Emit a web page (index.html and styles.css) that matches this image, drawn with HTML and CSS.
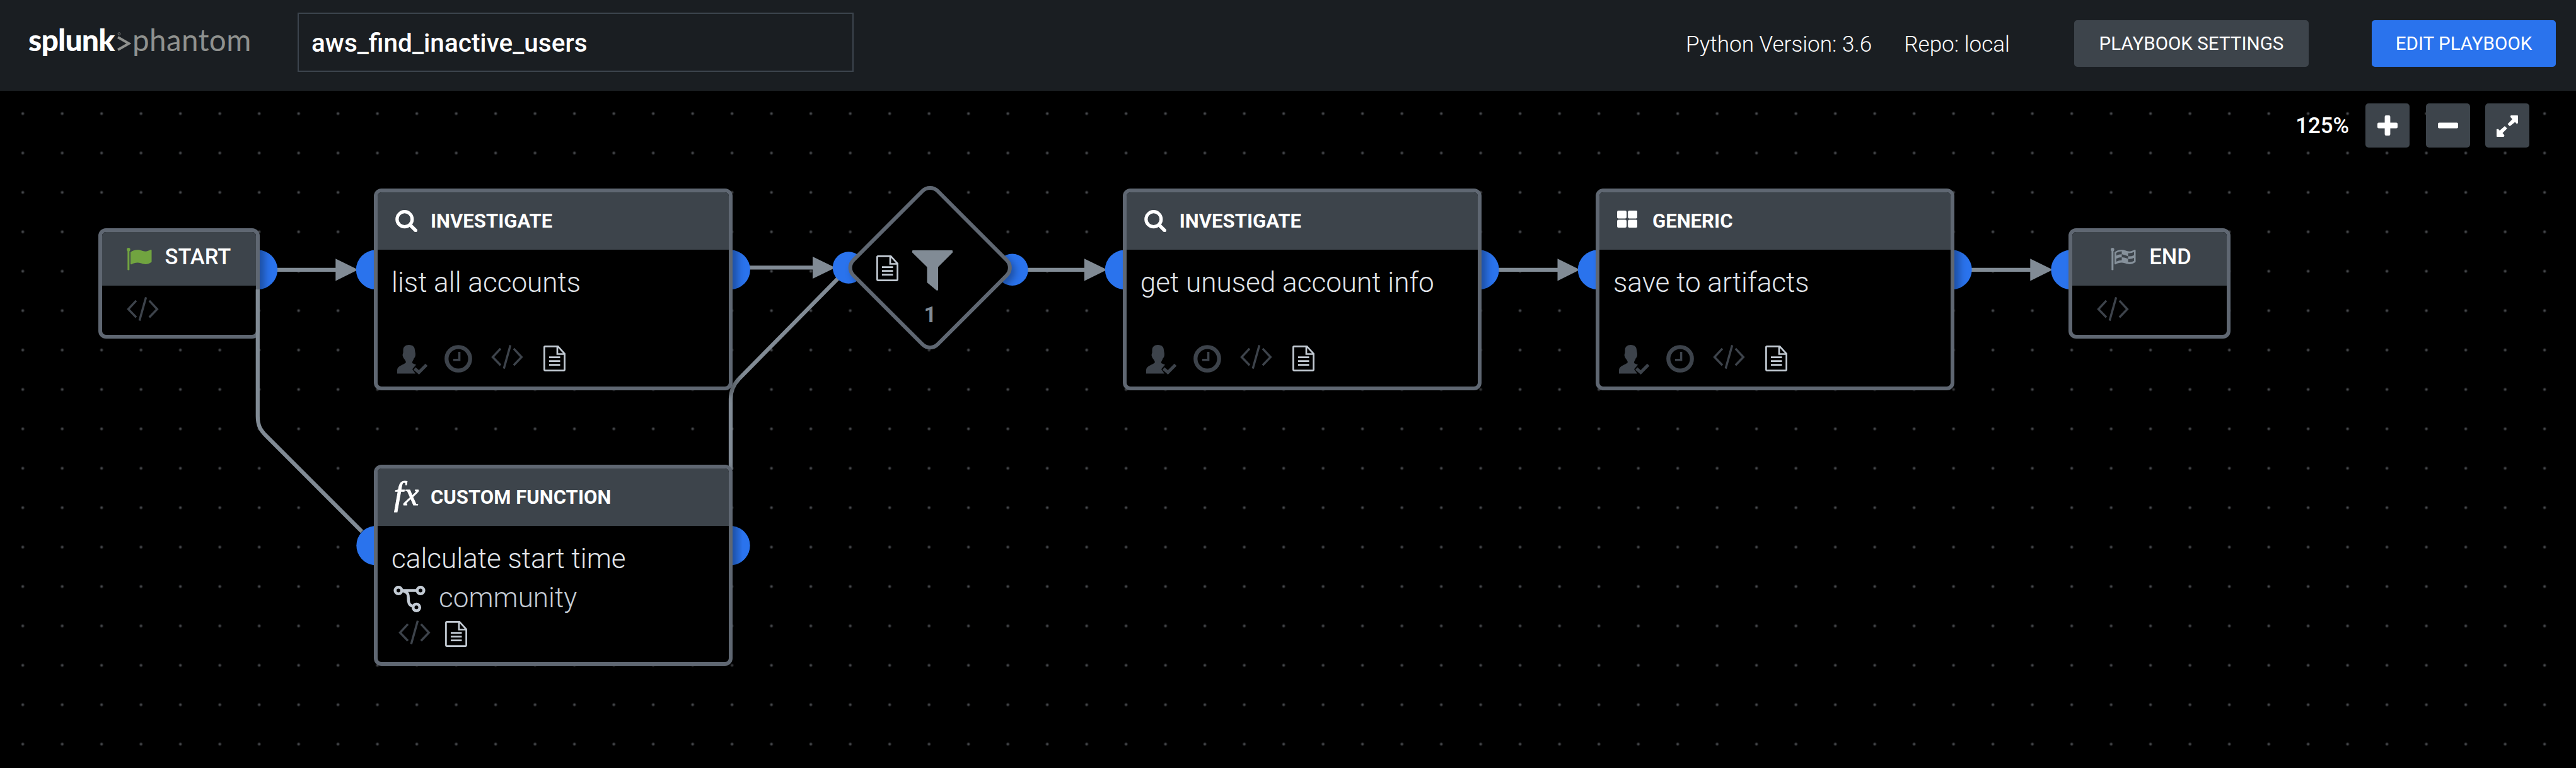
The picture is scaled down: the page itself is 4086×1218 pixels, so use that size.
FILE: index.html
```
<!DOCTYPE html>
<html lang="en">
<head>
<meta charset="utf-8">
<title>aws_find_inactive_users</title>
<link rel="stylesheet" href="styles.css">
</head>
<body>
<svg class="sprite" aria-hidden="true">
  <symbol id="i-search" viewBox="0 0 35 35"><circle cx="14.8" cy="14.7" r="12" fill="none" stroke="currentColor" stroke-width="5.2"/><path d="M23.5 23.8 32.3 32.4" stroke="currentColor" stroke-width="5.6" stroke-linecap="round"/></symbol>
  <symbol id="i-grid" viewBox="0 0 32 27"><g fill="currentColor"><rect width="15" height="12.4" rx="2.2"/><rect x="17.2" width="15" height="12.4" rx="2.2"/><rect y="14.6" width="15" height="12.4" rx="2.2"/><rect x="17.2" y="14.6" width="15" height="12.4" rx="2.2"/></g></symbol>
  <symbol id="i-flag" viewBox="0 0 40 36"><g fill="currentColor"><circle cx="2.8" cy="2.8" r="2.8"/><rect x="1.3" y="3" width="3" height="32.5" rx="1.2"/><path d="M6 7C10 3.5 18 2 24 4.6 30 7 34 5 38 3Q39.5 2.6 39.5 4.2V22.5C34 26.5 29 27 23 24.6 17 22.4 12 23.8 8 26Q6 27 6 25Z"/></g></symbol>
  <symbol id="i-finish" viewBox="0 0 40 36"><g fill="currentColor"><circle cx="2.8" cy="2.8" r="2.8"/><rect x="1.3" y="3" width="3" height="32.5" rx="1.2"/><path d="M6 7C10 3.5 18 2 24 4.6 30 7 34 5 38 3Q39.5 2.6 39.5 4.2V22.5C34 26.5 29 27 23 24.6 17 22.4 12 23.8 8 26Q6 27 6 25Z"/></g><g class="finish-cells"><path d="M8.7 8Q13 5.300 17.5 5.4V10.3Q13 10.2 8.7 12.4Z"/><path d="M27.5 8.5Q32.5 9 37 6.600V11.7Q32.5 14 27.5 13.5Z"/><path d="M17.5 10.3Q23 11.2 27.5 13.5V17.5Q23 15.4 17.5 15Z"/><path d="M8.7 17.2Q13 15 17.5 15V19.7Q13 19.8 8.7 22Z"/><path d="M27.5 17.5Q32.5 18.3 37 16V20.7Q32.5 23.5 27.5 22.5Z"/></g></symbol>
  <symbol id="i-code" viewBox="0 0 51 38"><path d="M15 5.8 2.5 19.3 15 32.3M35.8 5.8 48.3 19.3 35.8 32.3M30.6.5 20.2 37.5" fill="none" stroke="currentColor" stroke-width="3.4"/></symbol>
  <symbol id="i-doc" viewBox="0 0 35 41"><path d="M2.6 1.4H23L33.6 13V38.5Q33.6 39.6 32.5 39.6H2.5Q1.4 39.6 1.4 38.5V2.6Q1.4 1.4 2.6 1.4ZM22 1.4V13.5H33.6M9 18.7H26.5M9 24.7H26.5M9 30.7H26.5" fill="none" stroke="currentColor" stroke-width="2.7"/></symbol>
  <symbol id="i-person" viewBox="0 0 49 47"><path d="M18.7 0C25 0 28 3.5 28 8.5L29 14C29.2 18 28 20 26.5 21.5 25.5 25 23.5 26 24 29L30 31.5 24 38.5 29 45.5H0V41C0 35.5 3 34 8 31.5 13 29 14.5 28.5 13.5 26 12 22 9.5 22 8.5 16L9.5 12V8.5C9.5 3 13 0 18.7 0Z" fill="currentColor"/><path d="M27.5 37.5 34.5 43.5 46.5 31.5" fill="none" stroke="currentColor" stroke-width="5"/></symbol>
  <symbol id="i-clock" viewBox="0 0 44 44"><circle cx="22" cy="22" r="18.7" fill="none" stroke="currentColor" stroke-width="6.3"/><path d="M23.6 11V23.8H14" fill="none" stroke="currentColor" stroke-width="3.5"/></symbol>
  <symbol id="i-branch" viewBox="0 0 51 42"><g fill="none" stroke="currentColor"><g stroke-width="4.6"><circle cx="8" cy="7.5" r="5.3"/><circle cx="43" cy="7.5" r="5.3"/><circle cx="36.5" cy="34.3" r="5.3"/></g><path d="M13 7.5H38M16 8.5C26 11 23 18 24 24.5S28 31 32 33" stroke-width="4.6"/></g></symbol>
  <symbol id="i-plus" viewBox="0 0 32 32"><g fill="currentColor"><rect y="11.6" width="32" height="8.8" rx="2"/><rect x="11.6" width="8.8" height="32" rx="2"/></g></symbol>
  <symbol id="i-minus" viewBox="0 0 32 32"><rect y="11.6" width="32" height="8.8" rx="2" fill="currentColor"/></symbol>
  <symbol id="i-expand" viewBox="0 0 34 34"><path d="M22.5 0H33Q34 0 34 1V12.5L31.500 13 29.4 10.6 21 17.3 17.5 13.8 25 6 21.8 2.5ZM11.5 34H1Q0 34 0 33V22L2.5 21.5 5 24 13 17 16.8 20.7 9.5 28 12.5 31.5Z" fill="currentColor"/></symbol>
  <symbol id="i-funnel" viewBox="0 0 64 64"><path d="M1 0H63Q64 0 64 1V3.5L41 26.5V62.5Q40.5 64.5 38.5 63.5L23.5 51V26.5L0 3.5V1Q0 0 1 0Z" fill="currentColor"/></symbol>
</svg>

<header class="topbar">
  <div class="logo"><span class="logo-brand">splunk</span><svg class="logo-mark" viewBox="0 0 22 30"><path d="M1 8 18.5 18 1 28" fill="none" stroke="currentColor" stroke-width="4"/><circle cx="3" cy="2.6" r="1.9" fill="none" stroke="currentColor" stroke-width=".8"/></svg><span class="logo-product">phantom</span></div>
  <div class="playbook-name">aws_find_inactive_users</div>
  <div class="meta"><span>Python Version: 3.6</span><span>Repo: local</span></div>
  <button class="btn btn-settings">PLAYBOOK SETTINGS</button>
  <button class="btn btn-edit">EDIT PLAYBOOK</button>
</header>

<main class="canvas">
  <svg class="layer" viewBox="0 144 4086 1074">
    <defs>
      <radialGradient id="dot"><stop offset="0" stop-color="#5c5e62"/><stop offset=".45" stop-color="#36383b"/><stop offset="1" stop-color="#000"/></radialGradient>
      <pattern id="grid" x="4.450" y="148.450" width="62.5" height="62.5" patternUnits="userSpaceOnUse"><circle cx="31.7" cy="31.7" r="3.2" fill="url(#dot)"/></pattern>
    </defs>
    <rect y="144" width="4086" height="1074" fill="url(#grid)"/>
    <g class="links">
      <path d="M409 427.8H540M1159 424.4H1295M1606 427.8H1726M2347 427.8H2476M3097 427.8H3226"/>
      <path d="M1346 424.5 1172 601Q1159 614.5 1159 633V745"/>
    </g>
    <g class="heads">
      <path d="M532.3 410.2 568 427.8 532.3 445.4ZM1289 406.9 1325 424.4 1289 441.9ZM1720 410.2 1756 427.8 1720 445.4ZM2470.5 410.2 2506 427.8 2470.5 445.4ZM3220.3 410.2 3256 427.8 3220.3 445.4Z"/>
    </g>
    <g class="ports">
      <circle cx="409" cy="427.8" r="31.2"/>
      <circle cx="596" cy="427.8" r="31.2"/><circle cx="1158.7" cy="427.8" r="31.2"/>
      <circle cx="1346" cy="424.5" r="25.2"/><circle cx="1605.6" cy="427.8" r="25.2"/>
      <circle cx="1784" cy="427.8" r="31.2"/><circle cx="2346.5" cy="427.8" r="31.2"/>
      <circle cx="2534" cy="427.8" r="31.2"/><circle cx="3096.5" cy="427.8" r="31.2"/>
      <circle cx="3284.5" cy="427.8" r="31.2"/>
    </g>
  </svg>

  <section class="node terminal start">
    <div class="node-head"><svg class="flag"><use href="#i-flag"/></svg><span>START</span></div>
    <div class="node-body"><svg class="code"><use href="#i-code"/></svg></div>
  </section>

  <section class="node block list-accounts">
    <div class="node-head"><span class="glyph"><svg class="search"><use href="#i-search"/></svg></span><span>INVESTIGATE</span></div>
    <div class="node-body">
      <div class="title">list all accounts</div>
      <div class="tools"><svg class="person"><use href="#i-person"/></svg><svg class="clock"><use href="#i-clock"/></svg><svg class="code"><use href="#i-code"/></svg><svg class="doc"><use href="#i-doc"/></svg></div>
    </div>
  </section>

  <section class="node block start-time">
    <div class="node-head"><span class="glyph fx">fx</span><span>CUSTOM FUNCTION</span></div>
    <div class="node-body">
      <div class="title">calculate start time</div>
      <div class="repo"><svg class="branch"><use href="#i-branch"/></svg><span>community</span></div>
      <div class="tools compact"><svg class="code"><use href="#i-code"/></svg><svg class="doc"><use href="#i-doc"/></svg></div>
    </div>
  </section>

  <section class="filter">
    <div class="filter-icons"><svg class="doc"><use href="#i-doc"/></svg><svg class="funnel"><use href="#i-funnel"/></svg></div>
    <div class="filter-count">1</div>
  </section>

  <section class="node block account-info">
    <div class="node-head"><span class="glyph"><svg class="search"><use href="#i-search"/></svg></span><span>INVESTIGATE</span></div>
    <div class="node-body">
      <div class="title">get unused account info</div>
      <div class="tools"><svg class="person"><use href="#i-person"/></svg><svg class="clock"><use href="#i-clock"/></svg><svg class="code"><use href="#i-code"/></svg><svg class="doc"><use href="#i-doc"/></svg></div>
    </div>
  </section>

  <section class="node block save-artifacts">
    <div class="node-head"><span class="glyph"><svg class="tiles"><use href="#i-grid"/></svg></span><span>GENERIC</span></div>
    <div class="node-body">
      <div class="title">save to artifacts</div>
      <div class="tools"><svg class="person"><use href="#i-person"/></svg><svg class="clock"><use href="#i-clock"/></svg><svg class="code"><use href="#i-code"/></svg><svg class="doc"><use href="#i-doc"/></svg></div>
    </div>
  </section>

  <section class="node terminal end">
    <div class="node-head"><svg class="flag"><use href="#i-finish"/></svg><span>END</span></div>
    <div class="node-body"><svg class="code"><use href="#i-code"/></svg></div>
  </section>

  <svg class="layer" viewBox="0 144 4086 1074">
    <g class="links"><path d="M408.8 459V660C408.8 675 413 682 422 691L574 843"/></g>
    <g class="ports"><path d="M593 834.2A31.2 31.2 0 0 0 593 896.2Z"/><path d="M1162 834.2A31.2 31.2 0 0 1 1162 896.2Z"/></g>
    <defs><linearGradient id="shade"><stop offset="0" stop-color="#000" stop-opacity=".3"/><stop offset="1" stop-color="#000" stop-opacity="0"/></linearGradient></defs>
    <path d="M1162 834.2A31.2 31.2 0 0 1 1178 840.5V890A31.2 31.2 0 0 1 1162 896.2Z" fill="url(#shade)"/>
  </svg>

  <div class="zoombar">
    <span class="zoom-level">125%</span>
    <button class="zoom-btn"><svg><use href="#i-plus"/></svg></button>
    <button class="zoom-btn"><svg><use href="#i-minus"/></svg></button>
    <button class="zoom-btn"><svg class="expand"><use href="#i-expand"/></svg></button>
  </div>
</main>
</body>
</html>
```
FILE: styles.css
```
*, *::before { box-sizing: border-box; }

body {
  margin: 0;
  width: 4086px;
  height: 1218px;
  overflow: hidden;
  display: flex;
  flex-direction: column;
  background: #000;
  color: #fff;
  font-family: Roboto, "Liberation Sans", sans-serif;
}

svg { display: block; flex: none; }
.sprite { position: absolute; width: 0; height: 0; }
button { border: 0; padding: 0; margin: 0; color: inherit; font-family: inherit; }

/* Top bar */
.topbar {
  flex: none;
  display: flex;
  align-items: center;
  height: 144px;
  padding: 0 32px 6px 45px;
  background: #1a1e22;
}

.logo {
  display: flex;
  align-items: baseline;
  width: 427px;
  height: 60px;
  margin-top: -13px;
  line-height: 60px;
  font-family: Lato, "Open Sans", sans-serif;
}
.logo-brand { width: 141px; font-size: 48px; font-weight: 900; letter-spacing: -0.8px; }
.logo-mark { width: 22px; height: 30px; margin-right: 2px; color: #8f918e; }
.logo-product { font-size: 47.5px; letter-spacing: .4px; color: #8f918e; }

.playbook-name {
  width: 882px;
  height: 94px;
  margin-bottom: 4px;
  padding: 2px 0 0 20px;
  border: 2px solid #3c444d;
  line-height: 88px;
  font-size: 40.5px;
  font-weight: 500;
}

.meta {
  display: flex;
  gap: 51px;
  margin: 1px 102px 0 auto;
  font-size: 35.1px;
  font-weight: 300;
}

.btn {
  height: 74px;
  border-radius: 5px;
  font-size: 29.6px;
  font-weight: 400;
}
.btn-settings { width: 372px; margin-right: 100px; background: #3d444b; }
.btn-edit { width: 292px; background: #2a73ed; }

/* Canvas */
.canvas { position: relative; flex: 1; }
.layer { position: absolute; inset: 0; width: 4086px; height: 1074px; }
.links path { fill: none; stroke: #818b95; stroke-width: 6.25; }
.heads { fill: #818b95; }
.ports { fill: #2a73ed; }

/* Nodes */
.node {
  position: absolute;
  border: 6px solid #5f6772;
  border-radius: 12px;
  background: #000;
  box-shadow: 8px 8px 12px rgba(0, 0, 0, .3);
  overflow: hidden;
}
.node-head { display: flex; align-items: center; background: #3d444b; }

.block { width: 568.75px; height: 319.5px; }
.block .node-head { height: 91px; padding-left: 28px; font-size: 31.1px; font-weight: 700; }
.block .node-body { padding: 25px 0 0 22px; color: #e1e5ea; }

.list-accounts { left: 593px; top: 155.25px; }
.start-time { left: 593px; top: 592.75px; }
.account-info { left: 1780.75px; top: 155.25px; }
.save-artifacts { left: 2531px; top: 155.25px; }

.glyph { width: 56px; }
.search { width: 35px; height: 35px; }
.tiles { width: 32px; height: 27px; margin-top: -7px; }
.fx {
  padding-bottom: 10px;
  font: italic 400 53px/60px "Liberation Serif", serif;
  letter-spacing: 1px;
  text-indent: -2px;
  -webkit-text-stroke: 1px #fff;
}

.title { line-height: 54px; font-size: 44.1px; font-weight: 300; }
.tools { display: flex; align-items: flex-start; margin: 72px 0 0 9px; color: #3d434b; }
.tools .clock { margin-left: 26px; }
.tools .code { margin-left: 30px; }
.tools .doc { margin: 1px 0 0 32px; }
.person { width: 49px; height: 47px; }
.clock { width: 44px; height: 44px; }
.code { width: 51px; height: 38px; }
.doc { width: 35px; height: 41px; color: #c3cbd4; }

.repo {
  display: flex;
  gap: 21px;
  margin: 8px 0 0 3px;
  line-height: 54px;
  font-size: 44.1px;
  font-weight: 300;
  color: #c3cbd4;
}
.branch { width: 51px; height: 42px; margin-top: 8px; }
.tools.compact { margin: 9px 0 0 11px; }
.compact .code { margin-left: 0; }
.compact .doc { margin-left: 23px; }

.terminal { width: 256.25px; height: 175px; }
.terminal .node-head { height: 85px; gap: 21px; padding-left: 39px; font-size: 34.5px; font-weight: 500; }
.terminal .node-head span { margin-top: -8px; }
.terminal .node-body { padding: 18px 0 0 39px; color: #3d434b; }
.flag { width: 40px; height: 36px; color: #71a440; }
.start { left: 155.5px; top: 218px; }
.end { left: 3281.25px; top: 218px; }
.end .node-head { padding-left: 61px; }
.end .flag { color: #86919b; }
.finish-cells { fill: #3d444b; }

/* Filter diamond */
.filter {
  position: absolute;
  left: 1338px;
  top: 143px;
  width: 275px;
  height: 275px;
  padding: 109.5px 0 0 52px;
}
.filter::before {
  content: "";
  position: absolute;
  left: 40.25px;
  top: 40.25px;
  width: 194.5px;
  height: 194.5px;
  border: 6px solid #5f6772;
  border-radius: 20px;
  background: #000;
  box-shadow: 8px 0 12px rgba(0, 0, 0, .3);
  transform: rotate(45deg);
}
.filter-icons { position: relative; display: flex; gap: 21.5px; }
.filter-icons .doc { margin-top: 8px; }
.funnel { width: 64px; height: 64px; color: #818b95; }
.filter-count {
  position: relative;
  margin: 17px 52px 0 0;
  line-height: 42px;
  text-align: center;
  font-size: 34.5px;
  font-weight: 700;
  color: #818b95;
}

/* Zoom controls */
.zoombar {
  position: absolute;
  top: 20px;
  right: 74px;
  display: flex;
  align-items: center;
}
.zoom-level { margin-right: 26px; font-size: 34.7px; font-weight: 500; }
.zoom-btn {
  display: flex;
  align-items: center;
  justify-content: center;
  width: 70px;
  height: 70px;
  margin-right: 26px;
  border-radius: 5px;
  background: #3d444b;
}
.zoom-btn:last-child { margin-right: 0; margin-left: -2px; }
.zoom-btn svg { width: 32px; height: 32px; margin-bottom: 1px; }
.zoom-btn svg.expand { width: 34px; height: 34px; margin: 1px 0 0; }
```
